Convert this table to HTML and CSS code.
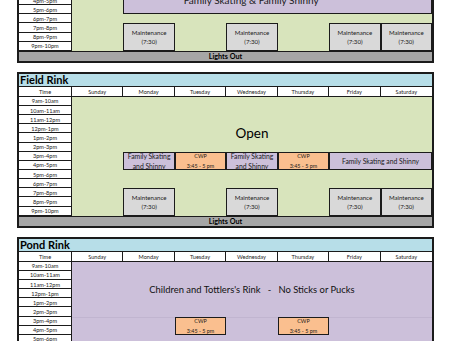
FILE: index.html
```html
<!DOCTYPE html>
<html lang="en">
<head>
<meta charset="utf-8">
<title>Rink Schedule</title>
<link rel="stylesheet" href="styles.css">
</head>
<body>
<div class="page">

  <section class="rink">
    <div class="title"></div>
    <div class="head"></div><div class="head"></div><div class="head"></div><div class="head"></div><div class="head"></div><div class="head"></div><div class="head"></div><div class="head last"></div>
    <div class="area green"></div>
    <div class="event purple top-family"><span>Family Skating &amp; Family Shinny</span></div>
    <div class="event grey mon evening"><span>Maintenance</span><span>(7:30)</span></div>
    <div class="event grey wed evening"><span>Maintenance</span><span>(7:30)</span></div>
    <div class="event grey fri evening"><span>Maintenance</span><span>(7:30)</span></div>
    <div class="event grey sat evening"><span>Maintenance</span><span>(7:30)</span></div>
    <div class="time"></div><div class="time"></div><div class="time"></div><div class="time"></div><div class="time"></div><div class="time"></div><div class="time"></div><div class="time">4pm-5pm</div><div class="time">5pm-6pm</div><div class="time">6pm-7pm</div><div class="time">7pm-8pm</div><div class="time">8pm-9pm</div><div class="time">9pm-10pm</div>
    <div class="lights">Lights Out</div>
  </section>

  <section class="rink">
    <div class="title">Field Rink</div>
    <div class="head">Time</div><div class="head">Sunday</div><div class="head">Monday</div><div class="head">Tuesday</div><div class="head">Wednesday</div><div class="head">Thursday</div><div class="head">Friday</div><div class="head last">Saturday</div>
    <div class="area green"></div>
    <div class="open">Open</div>
    <div class="event purple mon afternoon two"><span>Family Skating</span><span>and Shinny</span></div>
    <div class="event orange tue afternoon cwp"><span>CWP</span><span>3:45 - 5 pm</span></div>
    <div class="event purple wed afternoon two"><span>Family Skating</span><span>and Shinny</span></div>
    <div class="event orange thu afternoon cwp"><span>CWP</span><span>3:45 - 5 pm</span></div>
    <div class="event purple fri-sat afternoon two"><span>Family Skating and Shinny</span></div>
    <div class="event grey mon evening"><span>Maintenance</span><span>(7:30)</span></div>
    <div class="event grey wed evening"><span>Maintenance</span><span>(7:30)</span></div>
    <div class="event grey fri evening"><span>Maintenance</span><span>(7:30)</span></div>
    <div class="event grey sat evening"><span>Maintenance</span><span>(7:30)</span></div>
    <div class="time">9am-10am</div><div class="time">10am-11am</div><div class="time">11am-12pm</div><div class="time">12pm-1pm</div><div class="time">1pm-2pm</div><div class="time">2pm-3pm</div><div class="time">3pm-4pm</div><div class="time">4pm-5pm</div><div class="time">5pm-6pm</div><div class="time">6pm-7pm</div><div class="time">7pm-8pm</div><div class="time">8pm-9pm</div><div class="time">9pm-10pm</div>
    <div class="lights">Lights Out</div>
  </section>

  <section class="rink">
    <div class="title">Pond Rink</div>
    <div class="head">Time</div><div class="head">Sunday</div><div class="head">Monday</div><div class="head">Tuesday</div><div class="head">Wednesday</div><div class="head">Thursday</div><div class="head">Friday</div><div class="head last">Saturday</div>
    <div class="area lilac"></div>
    <div class="split"></div>
    <div class="notice">Children and Tottlers's Rink   -   No Sticks or Pucks</div>
    <div class="event orange tue afternoon cwp"><span>CWP</span><span>3:45 - 5 pm</span></div>
    <div class="event orange thu afternoon cwp"><span>CWP</span><span>3:45 - 5 pm</span></div>
    <div class="time">9am-10am</div><div class="time">10am-11am</div><div class="time">11am-12pm</div><div class="time">12pm-1pm</div><div class="time">1pm-2pm</div><div class="time">2pm-3pm</div><div class="time">3pm-4pm</div><div class="time">4pm-5pm</div><div class="time">5pm-6pm</div><div class="time"></div><div class="time"></div><div class="time"></div><div class="time"></div>
    <div class="lights"></div>
  </section>

</div>
</body>
</html>
```
FILE: styles.css
```css
html, body {
  margin: 0;
  padding: 0;
  overflow: hidden;
  background: #ffffff;
}

body {
  font-family: Lato, "Liberation Sans", sans-serif;
  color: #1a1a1a;
}

.page {
  display: flex;
  flex-direction: column;
  gap: 9px;
  padding-left: 17px;
  margin-top: -93px;
}

.rink {
  display: grid;
  width: 417px;
  box-sizing: border-box;
  border: 2px solid #1b1b1b;
  grid-template-columns: 53px repeat(7, 1fr);
  grid-template-rows: 13px 10px repeat(13, 9.15px) 10px;
  background: #ffffff;
}

.rink > * {
  box-sizing: border-box;
  min-width: 0;
  min-height: 0;
}

.title {
  grid-row: 1;
  grid-column: 1 / -1;
  background: #b7dee8;
  border-bottom: 1px solid #1b1b1b;
  font-weight: 700;
  font-size: 11px;
  line-height: 12px;
  padding-left: 1px;
  color: #000;
}

.head {
  grid-row: 2;
  background: #ffffff;
  border-right: 1px solid #1b1b1b;
  border-bottom: 1px solid #1b1b1b;
  font-size: 5.6px;
  display: flex;
  align-items: center;
  justify-content: center;
  white-space: nowrap;
}

.head.last {
  border-right: 0;
}

.time {
  grid-column: 1;
  background: #ffffff;
  border-right: 1px solid #1b1b1b;
  border-bottom: 1px solid #1b1b1b;
  font-size: 5.6px;
  display: flex;
  align-items: center;
  justify-content: center;
  white-space: nowrap;
}

.lights {
  grid-row: 16;
  grid-column: 1 / -1;
  background: #a6a6a6;
  border-top: 1px solid #1b1b1b;
  font-weight: 700;
  font-size: 7.2px;
  display: flex;
  align-items: center;
  justify-content: center;
  color: #000;
}

.area {
  grid-column: 2 / -1;
  grid-row: 3 / 16;
}

.green { background: #d8e4bc; }
.lilac { background: #ccc0da; }

.split {
  grid-column: 2 / -1;
  grid-row: 9 / 16;
  border-top: 1px solid #c1b5d0;
}

.open {
  grid-column: 2 / -1;
  grid-row: 3 / 8;
  display: flex;
  align-items: flex-end;
  justify-content: center;
  font-size: 13.5px;
  line-height: 15px;
  padding-bottom: 2px;
  color: #000;
}

.notice {
  grid-column: 2 / -1;
  grid-row: 3 / 9;
  display: flex;
  align-items: center;
  justify-content: center;
  font-size: 9.4px;
  white-space: pre;
  color: #111;
}

.event {
  border: 1px solid #1b1b1b;
  display: flex;
  flex-direction: column;
  align-items: center;
  justify-content: center;
  text-align: center;
  white-space: nowrap;
  font-size: 6.1px;
  line-height: 9.3px;
}

.event.two {
  font-size: 6.8px;
  line-height: 10px;
}

.event.cwp {
  font-size: 5.4px;
  line-height: 10px;
}

.purple { background: #ccc0da; }
.orange { background: #fabf8f; }
.grey { background: #d9d9d9; }

.mon { grid-column: 3; }
.tue { grid-column: 4; }
.wed { grid-column: 5; }
.thu { grid-column: 6; }
.fri { grid-column: 7; }
.sat { grid-column: 8; }
.fri-sat { grid-column: 7 / 9; }

.afternoon { grid-row: 9 / 11; }
.evening { grid-row: 13 / 16; }

.top-family {
  grid-column: 3 / -1;
  grid-row: 9 / 12;
  font-size: 10px;
  padding-right: 53px;
}
```
